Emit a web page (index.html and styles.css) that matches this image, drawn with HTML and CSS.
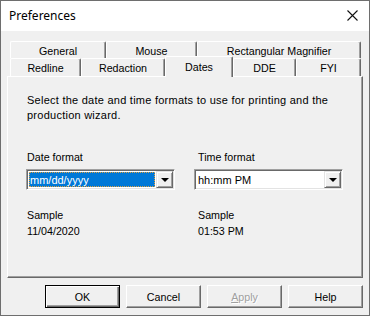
FILE: index.html
```html
<!DOCTYPE html>
<html>
<head>
<meta charset="utf-8">
<link rel="stylesheet" href="styles.css">
</head>
<body>
<div class="window">
  <div class="titlebar">
    <span class="title">Preferences</span>
    <svg class="close" width="12" height="12" viewBox="0 0 12 12"><path d="M0.5 0.5 L10.5 10.5 M10.5 0.5 L0.5 10.5" stroke="#111" stroke-width="1.1" fill="none"/></svg>
  </div>
  <div class="client">
    <div class="tabs">
      <div class="tabrow">
        <div class="tab w-general">General</div>
        <div class="tab w-mouse">Mouse</div>
        <div class="tab w-rect">Rectangular Magnifier</div>
      </div>
      <div class="tabrow">
        <div class="tab w-redline">Redline</div>
        <div class="tab w-redaction">Redaction</div>
        <div class="tab w-dates selected">Dates</div>
        <div class="tab w-dde">DDE</div>
        <div class="tab w-fyi">FYI</div>
      </div>
    </div>
    <div class="panel">
      <p class="desc">Select the date and time formats to use for printing and the production wizard.</p>
      <div class="cols">
        <div class="col col-left">
          <div class="label">Date format</div>
          <div class="combo">
            <div class="field"><span class="sel">mm/dd/yyyy</span></div>
            <div class="drop"><span class="tri"></span></div>
          </div>
          <div class="label sample">Sample</div>
          <div class="label">11/04/2020</div>
        </div>
        <div class="col col-right">
          <div class="label">Time format</div>
          <div class="combo">
            <div class="field"><span class="val">hh:mm PM</span></div>
            <div class="drop"><span class="tri"></span></div>
          </div>
          <div class="label sample">Sample</div>
          <div class="label">01:53 PM</div>
        </div>
      </div>
    </div>
    <div class="buttons">
      <div class="btn default">OK</div>
      <div class="btn">Cancel</div>
      <div class="btn disabled"><u>A</u>pply</div>
      <div class="btn">Help</div>
    </div>
  </div>
</div>
</body>
</html>
```
FILE: styles.css
```css
* { box-sizing: border-box; }
html, body { margin: 0; padding: 0; background: #fff; }
.window {
  width: 370px;
  height: 316px;
  border: 1px solid #6e6e6e;
  display: flex;
  flex-direction: column;
  font-family: "Liberation Sans", Arial, sans-serif;
  font-size: 10.7px;
  color: #000;
}
.titlebar {
  height: 30px;
  background: #fff;
  display: flex;
  align-items: center;
  justify-content: space-between;
  padding: 0 10px 0 8px;
}
.title {
  font-family: "Noto Sans", "Open Sans", sans-serif;
  font-size: 12px;
  color: #000;
  margin-top: -1px;
}
.close { display: block; margin-top: -1px; }
.client {
  flex: 1;
  background: #f0f0f0;
  padding: 10px 6px 0 6px;
  display: flex;
  flex-direction: column;
}
.tabs { margin-left: 3px; }
.tabrow { display: flex; align-items: flex-start; }
.tabrow .tab { height: 18px; }
.tabrow:first-child .tab { height: 17px; }
.tab {
  background: #f0f0f0;
  border-top: 1px solid #fff;
  border-left: 1px solid #fff;
  border-right: 1px solid #696969;
  box-shadow: inset -1px 0 #a0a0a0;
  border-radius: 2px 2px 0 0;
  display: flex;
  align-items: center;
  justify-content: center;
  padding-top: 1px;
}
.w-general { width: 96px; }
.w-mouse { width: 91px; }
.w-rect { width: 164px; }
.w-redline { width: 71px; }
.w-redaction { width: 84px; }
.w-dates { width: 68px; }
.w-dde { width: 63px; }
.w-fyi { width: 65px; }
.tabrow .tab.selected {
  position: relative;
  z-index: 1;
  height: 21px;
  margin-top: -2px;
  margin-bottom: -1px;
  padding-top: 0;
  padding-bottom: 1px;
}
.panel {
  height: 202px;
  border-top: 1px solid #fff;
  border-left: 1px solid #fff;
  border-right: 1px solid #696969;
  border-bottom: 1px solid #696969;
  box-shadow: inset -1px -1px #a0a0a0;
  padding: 16px 19px 0 19px;
}
.desc {
  margin: 0;
  font-size: 11px;
  line-height: 15px;
  letter-spacing: 0.25px;
  width: 320px;
}
.cols {
  display: flex;
  margin-top: 28px;
}
.col { display: flex; flex-direction: column; }
.col-left { width: 170px; margin-left: -1px; }
.label { line-height: 13px; padding-left: 1px; }
.col-right .label { padding-left: 4px; }
.sample { margin-top: 19px; margin-bottom: 3px; }
.combo {
  margin-top: 5px;
  width: 149px;
  height: 21px;
  display: flex;
  border-top: 1px solid #a0a0a0;
  border-left: 1px solid #a0a0a0;
  border-right: 1px solid #fff;
  border-bottom: 1px solid #fff;
  box-shadow: inset 1px 1px #696969, inset -1px -1px #e3e3e3;
  background: #fff;
  padding: 1px;
}
.field {
  flex: 1;
  display: flex;
  align-items: center;
  padding: 1px;
  font-size: 11px;
}
.sel {
  flex: 1;
  height: 100%;
  background: #0078d7;
  color: #fff;
  outline: 1px dotted #e0a040;
  outline-offset: -1px;
  display: flex;
  align-items: center;
  padding-left: 1px;
}
.val { padding-left: 1px; }
.drop {
  width: 17px;
  background: #f0f0f0;
  border-top: 1px solid #e3e3e3;
  border-left: 1px solid #e3e3e3;
  border-right: 1px solid #696969;
  border-bottom: 1px solid #696969;
  box-shadow: inset 1px 1px #fff, inset -1px -1px #a0a0a0;
  display: flex;
  align-items: center;
  justify-content: center;
}
.tri {
  width: 0;
  height: 0;
  border-left: 4px solid transparent;
  border-right: 4px solid transparent;
  border-top: 4px solid #000;
  margin-top: 1px;
}
.buttons {
  display: flex;
  justify-content: flex-end;
  gap: 6px;
  margin-top: 7px;
}
.btn {
  width: 75px;
  height: 23px;
  display: flex;
  align-items: center;
  justify-content: center;
  background: #f0f0f0;
  border-top: 1px solid #fff;
  border-left: 1px solid #fff;
  border-right: 1px solid #696969;
  border-bottom: 1px solid #696969;
  box-shadow: inset -1px -1px #a0a0a0;
}
.btn.default {
  border: 1px solid #000;
  box-shadow: inset 1px 1px #fff, inset -1px -1px #696969, inset -2px -2px #a0a0a0;
}
.btn.disabled {
  color: #a0a0a0;
  text-shadow: 1px 1px #fff;
}
.btn u { text-decoration: underline; }
```
